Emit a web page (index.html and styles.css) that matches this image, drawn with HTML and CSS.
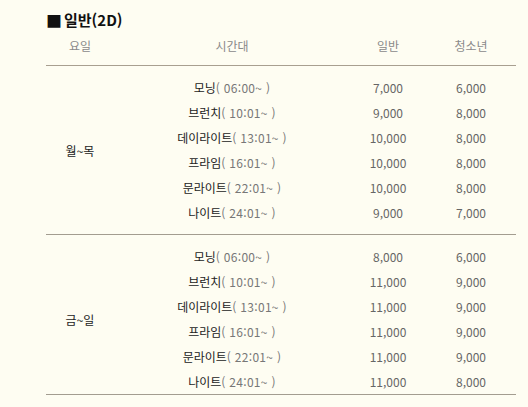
FILE: index.html
```html
<!DOCTYPE html>
<html lang="ko">
<head>
<meta charset="utf-8">
<link rel="stylesheet" href="styles.css">
</head>
<body>
<div class="page">
  <h2 class="title"><span class="sq">■</span>일반(2D)</h2>
  <div class="table">
    <div class="head">
      <div class="c-day">요일</div>
      <div class="c-time">시간대</div>
      <div class="c-num">일반</div>
      <div class="c-teen">청소년</div>
    </div>
    <div class="group">
      <div class="c-day day">월~목</div>
      <div class="rows">
        <div class="row"><div class="c-time"><b>모닝</b><i>( 06:00~ )</i></div><div class="c-num">7,000</div><div class="c-teen">6,000</div></div>
        <div class="row"><div class="c-time"><b>브런치</b><i>( 10:01~ )</i></div><div class="c-num">9,000</div><div class="c-teen">8,000</div></div>
        <div class="row"><div class="c-time"><b>데이라이트</b><i>( 13:01~ )</i></div><div class="c-num">10,000</div><div class="c-teen">8,000</div></div>
        <div class="row"><div class="c-time"><b>프라임</b><i>( 16:01~ )</i></div><div class="c-num">10,000</div><div class="c-teen">8,000</div></div>
        <div class="row"><div class="c-time"><b>문라이트</b><i>( 22:01~ )</i></div><div class="c-num">10,000</div><div class="c-teen">8,000</div></div>
        <div class="row"><div class="c-time"><b>나이트</b><i>( 24:01~ )</i></div><div class="c-num">9,000</div><div class="c-teen">7,000</div></div>
      </div>
    </div>
    <div class="group last">
      <div class="c-day day">금~일</div>
      <div class="rows">
        <div class="row"><div class="c-time"><b>모닝</b><i>( 06:00~ )</i></div><div class="c-num">8,000</div><div class="c-teen">6,000</div></div>
        <div class="row"><div class="c-time"><b>브런치</b><i>( 10:01~ )</i></div><div class="c-num">11,000</div><div class="c-teen">9,000</div></div>
        <div class="row"><div class="c-time"><b>데이라이트</b><i>( 13:01~ )</i></div><div class="c-num">11,000</div><div class="c-teen">9,000</div></div>
        <div class="row"><div class="c-time"><b>프라임</b><i>( 16:01~ )</i></div><div class="c-num">11,000</div><div class="c-teen">9,000</div></div>
        <div class="row"><div class="c-time"><b>문라이트</b><i>( 22:01~ )</i></div><div class="c-num">11,000</div><div class="c-teen">9,000</div></div>
        <div class="row"><div class="c-time"><b>나이트</b><i>( 24:01~ )</i></div><div class="c-num">11,000</div><div class="c-teen">8,000</div></div>
      </div>
    </div>
  </div>
</div>
</body>
</html>
```

FILE: styles.css
```css
html, body {
  margin: 0;
  padding: 0;
  background: #fefdf2;
}
body {
  font-family: "Noto Sans CJK KR", "Noto Sans", sans-serif;
  font-size: 12px;
  color: #333;
}
.page {
  padding: 10px 0 0 46px;
  width: 470px;
}
.title {
  margin: 0;
  font-size: 15px;
  line-height: 20px;
  font-weight: bold;
  color: #111;
  display: flex;
  align-items: center;
}
.sq {
  font-size: 16px;
  line-height: 20px;
  margin-right: 2px;
}
.table {
  width: 470px;
}
.head {
  display: flex;
  padding: 4px 0 7px;
  line-height: 24px;
  color: #8a8a8a;
  border-bottom: 1px solid #a89f90;
  text-align: center;
}
.c-day { width: 68px; text-align: center; }
.c-time { width: 236px; text-align: center; }
.c-num { width: 76px; text-align: center; }
.c-teen { width: 90px; text-align: center; }
.group {
  display: flex;
  align-items: center;
  padding: 9px 0;
  border-bottom: 1px solid #a39d90;
}
.group.last {
  padding-bottom: 0;
}
.day {
  color: #222;
}
.rows {
  display: flex;
  flex-direction: column;
}
.row {
  display: flex;
  line-height: 25px;
  height: 25px;
}
.row b {
  font-weight: normal;
  color: #222;
}
.row i {
  font-style: normal;
  color: #777;
  letter-spacing: 0.3px;
}
.row .c-num, .row .c-teen {
  color: #666;
}
```
